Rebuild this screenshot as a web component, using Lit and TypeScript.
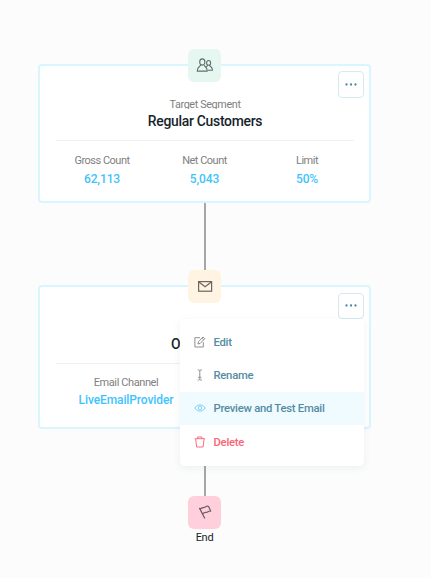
import { LitElement, html, css, svg } from "lit";
import { customElement } from "lit/decorators.js";

const icons = {
  users: html`<svg width="18" height="16" viewBox="0 0 18 16" fill="none" stroke="#60706f" stroke-width="1.1" stroke-linejoin="round" stroke-linecap="round">
    <ellipse cx="6.3" cy="4" rx="2.6" ry="3.1"/><path d="M4.8 6.8C4.6 8.5 1.2 8.2 1.2 13.1H11.3C11.3 8.2 8 8.5 7.8 6.8"/>
    <ellipse cx="12.6" cy="4.9" rx="2" ry="2.4"/><path d="M11.7 7.1C11.6 8.1 10.6 8.3 10.2 8.7M13.6 7.1C13.8 8.8 16.5 8.2 16.5 12.2H12.2"/></svg>`,
  mail: html`<svg width="16" height="12" viewBox="0 0 16 12" fill="none" stroke="#6b655f" stroke-width="1.2"><rect x="1.6" y=".6" width="13" height="9.6"/><path d="M1.9 1 8.1 5.8 14.3 1"/></svg>`,
  flag: html`<svg width="16" height="16" viewBox="0 0 16 16" fill="none" stroke="#6d5865" stroke-width="1.2" stroke-linejoin="round" stroke-linecap="round"><path d="M2.6 3.4 7.6 13M3.2 4.2C5.1 1.4 7 3.5 8.9 1.6 9.9.9 11 1.2 11.6 1.6L13.7 6.1C11.6 5.4 11 7.3 9.2 7.4 7.6 7.3 7 7.4 5.6 9"/></svg>`,
  edit: html`<svg width="12" height="12" viewBox="0 0 12 12" fill="none" stroke="#8f8f8f" stroke-width="1"><path d="M6 1.7H.9V11H9.3V6.2"/><path d="M3.9 8 4.5 5.7 9 1 10.8 2.6 6.2 7.4ZM7.9 2.2 9.6 3.8"/></svg>`,
  cursor: html`<svg width="12" height="12" viewBox="0 0 12 12" fill="none" stroke="#8f8f8f" stroke-width="1"><path d="M3.7.9C5 .9 5.8 1.3 5.8 2V10C5.8 10.7 5 11.1 3.7 11.1M7.9.9C6.6.9 5.8 1.3 5.8 2M5.8 10C5.8 10.7 6.6 11.1 7.9 11.1M4.2 8.3H7.4"/></svg>`,
  eye: html`<svg width="12" height="12" viewBox="0 0 12 12" fill="none" stroke="#84cff9" stroke-width="1"><path d="M.8 6C3.3 1.9 8.7 1.9 11.2 6 8.7 10.1 3.3 10.1.8 6Z"/><circle cx="6" cy="6" r="1.8"/></svg>`,
  trash: html`<svg width="12" height="12" viewBox="0 0 12 12" fill="none" stroke="#fb6f80" stroke-width="1"><path d="M.7 2.7H11M3.6 2.5V1H7.9V2.5M1.7 3 2.6 11H9.1L10 3"/></svg>`,
  dots: html`<svg width="12" height="4" viewBox="0 0 12 4" fill="#4b88a4">${[1.5, 6, 10.5].map((x) => svg`<circle cx=${x} cy="1.5" r="1.15"/>`)}</svg>`,
};

@customElement("app-root")
export class AppRoot extends LitElement {
  static styles = css`
    :host {
      display: block;
      height: 578px;
      overflow: hidden;
      background: #fcfcfc;
      font-family: Roboto, sans-serif;
      color: #16232b;
    }
    * { box-sizing: border-box; }
    svg { display: block; flex: none; }
    .flow {
      display: flex;
      flex-direction: column;
      align-items: center;
      width: 333px;
      margin-left: 38px;
      padding-top: 64px;
    }
    .card {
      position: relative;
      width: 333px;
      border: 2px solid #d9f5fd;
      border-radius: 4px;
      background: #fff;
      padding: 0 15px 0 16px;
      text-align: center;
    }
    .segment { height: 139px; padding-top: 31px; }
    .email { height: 144px; padding-top: 33px; }
    .badge {
      display: flex;
      align-items: center;
      justify-content: center;
      width: 33px;
      height: 33px;
      border-radius: 6px;
    }
    .card .badge { position: absolute; left: 148px; top: -17px; }
    .mint { background: #e6f7f2; }
    .peach { background: #fff3e1; }
    .pink { background: #ffd0dc; }
    .more {
      position: absolute;
      right: 5px;
      top: 5px;
      width: 26px;
      height: 27px;
      padding: 0;
      border: 1px solid #d4eaef;
      border-radius: 4px;
      background: #fff;
      display: flex;
      align-items: center;
      justify-content: center;
    }
    .email .more { top: 6px; height: 26px; }
    .kind { height: 12px; line-height: 14px; font-size: 10.8px; letter-spacing: -0.36px; color: #808080; overflow: hidden; }
    .segment .kind { height: 11px; margin-top: 1px; }
    .name { height: 18px; margin-top: 3px; line-height: 18px; font-size: 13.9px; letter-spacing: -0.28px; font-weight: 500; }
    .name.start { padding-left: 115px; text-align: left; }
    .stats {
      display: flex;
      justify-content: center;
      border-top: 1px solid #eef0f1;
      margin-top: 10px;
      padding-top: 13px;
    }
    .stat { width: 102.5px; flex: none; }
    .segment .stats { padding-right: 1px; }
    .email .stats { padding-top: 12px; padding-right: 1px; }
    .wide { width: 157px; }
    .label { height: 14px; line-height: 14px; font-size: 11px; letter-spacing: -0.5px; color: #808080; }
    .wide .label { letter-spacing: -0.4px; }
    .value { height: 18px; margin-top: 2px; line-height: 18px; font-size: 12px; letter-spacing: -0.1px; font-weight: 500; color: #3fc3fc; }
    .wide .value { margin-top: 1px; }
    .link { width: 2px; background: #a6a6a6; }
    .menu {
      position: absolute;
      left: 140px;
      top: 32px;
      width: 184px;
      height: 147px;
      padding-top: 6px;
      border-radius: 5px;
      background: #fff;
      box-shadow: 0 2px 8px rgba(70, 110, 130, 0.09);
    }
    .item {
      display: flex;
      align-items: center;
      gap: 8px;
      height: 33.3px;
      padding-left: 13.5px;
      font-size: 11.3px;
      letter-spacing: -0.27px;
      font-weight: 500;
      color: #558ca3;
    }
    .item span { padding-top: 1px; }
    .active { background: #effbff; }
    .danger { color: #fb6376; }
    .end { margin-top: 2px; line-height: 14px; font-size: 11px; letter-spacing: -0.3px; }
  `;

  private stat(label: string, value: string, wide = false) {
    return html`<div class="stat ${wide ? "wide" : ""}"><div class="label">${label}</div><div class="value">${value}</div></div>`;
  }

  private item(icon: unknown, label: string, tone = "") {
    return html`<div class="item ${tone}">${icon}<span>${label}</span></div>`;
  }

  render() {
    return html`
      <div class="flow">
        <section class="card segment">
          <div class="badge mint">${icons.users}</div>
          <button class="more" aria-label="More">${icons.dots}</button>
          <div class="kind">Target Segment</div>
          <div class="name">Regular Customers</div>
          <div class="stats">
            ${this.stat("Gross Count", "62,113")}${this.stat("Net Count", "5,043")}${this.stat("Limit", "50%")}
          </div>
        </section>
        <div class="link" style="height:82px"></div>
        <section class="card email">
          <div class="badge peach">${icons.mail}</div>
          <button class="more" aria-label="More">${icons.dots}</button>
          <div class="kind"></div>
          <div class="name start">O</div>
          <div class="stats">${this.stat("Email Channel", "LiveEmailProvider", true)}${this.stat("", "", true)}</div>
          <div class="menu">
            ${this.item(icons.edit, "Edit")}
            ${this.item(icons.cursor, "Rename")}
            ${this.item(icons.eye, "Preview and Test Email", "active")}
            ${this.item(icons.trash, "Delete", "danger")}
          </div>
        </section>
        <div class="link" style="height:67px"></div>
        <div class="badge pink">${icons.flag}</div>
        <div class="end">End</div>
      </div>
    `;
  }
}
